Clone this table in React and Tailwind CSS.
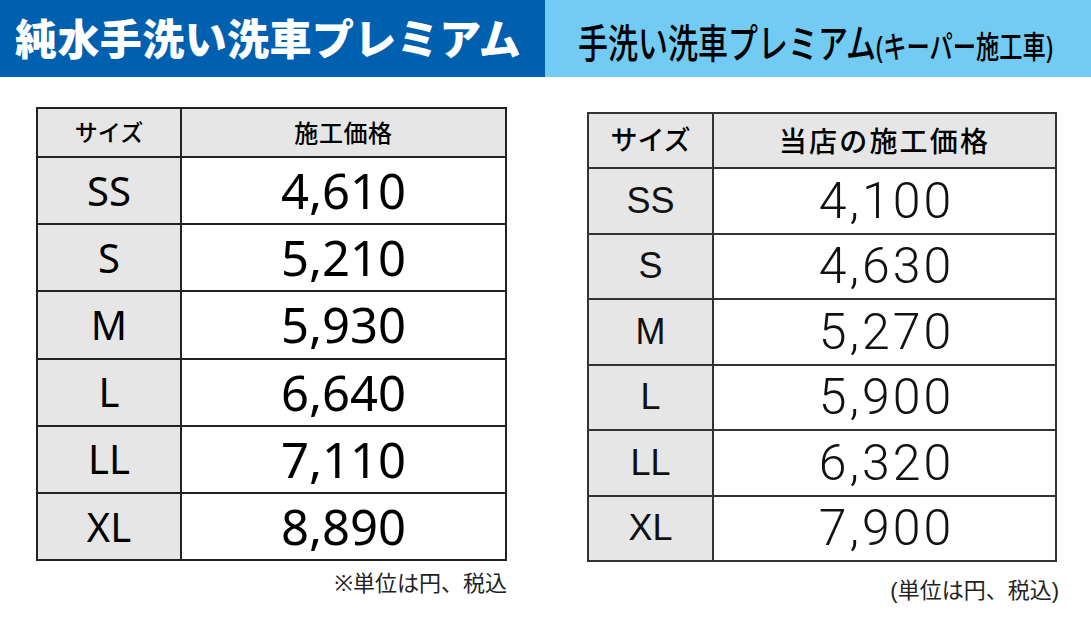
import React from "react";

const jp = { fontFamily: '"Noto Sans", "Noto Sans CJK JP", sans-serif' };
const helv = { fontFamily: '"Liberation Sans", "Noto Sans CJK JP", sans-serif' };
const roboto = { fontFamily: 'Roboto, "Liberation Sans", sans-serif' };

const pureRows = [
  { size: "SS", price: "4,610" },
  { size: "S", price: "5,210" },
  { size: "M", price: "5,930" },
  { size: "L", price: "6,640" },
  { size: "LL", price: "7,110" },
  { size: "XL", price: "8,890" },
];

const keeperRows = [
  { size: "SS", price: "4,100" },
  { size: "S", price: "4,630" },
  { size: "M", price: "5,270" },
  { size: "L", price: "5,900" },
  { size: "LL", price: "6,320" },
  { size: "XL", price: "7,900" },
];

const App = () => {
  return (
    <div className="w-[1091px] h-[618px] bg-white overflow-hidden" style={jp}>
      {/* banners */}
      <div className="flex h-[77px]">
        <div className="w-[545px] shrink-0 bg-[#0060b0] flex items-center pl-[15px] overflow-hidden">
          <span className="text-white text-[42px] font-black leading-none tracking-[0.01em] whitespace-nowrap">
            純水手洗い洗車プレミアム
          </span>
        </div>
        <div className="flex-1 min-w-0 bg-[#72cbf2] flex items-center pl-[33px] pt-[8px] overflow-hidden">
          <span className="inline-block origin-left scale-x-[0.75] whitespace-nowrap text-black font-medium leading-none">
            <span className="text-[40px]">手洗い洗車プレミアム</span>
            <span className="text-[31px]">(キーパー施工車)</span>
          </span>
        </div>
      </div>

      <div className="flex">
        {/* left table */}
        <div className="w-[545px] shrink-0 pl-[36px] pt-[30px]">
          <table className="w-[471px] border-collapse">
            <thead>
              <tr className="h-[49px] bg-[#e6e6e6]">
                <th className="w-[144px] border-2 border-[#222] text-[23px] font-medium text-black">サイズ</th>
                <th className="border-2 border-[#222] text-[24px] font-medium text-black tracking-wide">施工価格</th>
              </tr>
            </thead>
            <tbody>
              {pureRows.map((r) => (
                <tr key={r.size} className="h-[67.2px]">
                  <td className="bg-[#e6e6e6] border-2 border-[#222] text-center text-[40px] leading-none text-black">
                    {r.size}
                  </td>
                  <td className="bg-white border-2 border-[#222] text-center text-[49px] leading-none text-black">
                    {r.price}
                  </td>
                </tr>
              ))}
            </tbody>
          </table>
          <div className="w-[471px] text-right text-[22px] text-[#222] mt-[5px]">※単位は円、税込</div>
        </div>

        {/* right table */}
        <div className="flex-1 pl-[42px] pt-[35px]">
          <table className="w-[470px] border-collapse">
            <thead>
              <tr className="h-[55px] bg-[#e6e6e6]">
                <th className="w-[125px] border-2 border-[#333] text-[27px] font-medium text-black">サイズ</th>
                <th className="border-2 border-[#333] text-[28px] font-medium text-black tracking-[0.08em]">当店の施工価格</th>
              </tr>
            </thead>
            <tbody>
              {keeperRows.map((r) => (
                <tr key={r.size} className="h-[65.5px]">
                  <td
                    className="bg-[#e6e6e6] border-2 border-[#333] text-center text-[36px] leading-none text-[#111]"
                    style={helv}
                  >
                    {r.size}
                  </td>
                  <td
                    className="bg-white border-2 border-[#333] text-center text-[50px] leading-none text-[#111] font-light tracking-[0.06em] pl-[4px]"
                    style={roboto}
                  >
                    {r.price}
                  </td>
                </tr>
              ))}
            </tbody>
          </table>
          <div className="w-[472px] text-right text-[22px] text-[#222] mt-[12px]" style={helv}>
            (単位は円、税込)
          </div>
        </div>
      </div>
    </div>
  );
};

export default App;
